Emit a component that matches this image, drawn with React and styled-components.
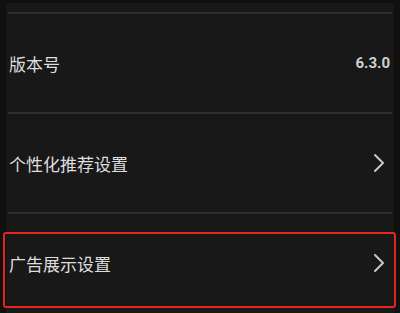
import React from "react";
import styled, { createGlobalStyle } from "styled-components";

const Global = createGlobalStyle`
  html, body { margin: 0; padding: 0; background: #101010; }
  body { font-family: "Noto Sans CJK SC", "Noto Sans", Roboto, sans-serif; }
`;

const Screen = styled.div`
  position: relative;
  width: 400px;
  height: 313px;
  overflow: hidden;
  background: #101010;
  padding: 3px 6px 0 6px;
  box-sizing: border-box;
`;

const Panel = styled.div`
  background: #181818;
  height: 100%;
  display: flex;
  flex-direction: column;
  padding-top: 9px;
  box-sizing: border-box;
`;

const Divider = styled.div`
  height: 2px;
  margin: 0 2px;
  background: #2e2e2e;
  flex: none;
`;

const Row = styled.div`
  height: 98px;
  flex: none;
  display: flex;
  align-items: center;
  justify-content: space-between;
  padding: 0 4px 0 3px;
  box-sizing: border-box;
`;

const Label = styled.span`
  font-size: 17px;
  color: #dedede;
`;

const Value = styled.span`
  font-family: Roboto, "Liberation Sans", sans-serif;
  font-weight: 700;
  font-size: 15px;
  color: #d0d0d0;
`;

const ChevronBox = styled.span`
  display: block;
  margin-right: 5px;
`;

const Highlight = styled.div`
  position: absolute;
  left: 3px;
  top: 232px;
  width: 393px;
  height: 76px;
  border: 2.5px solid #e5231f;
  border-radius: 3px;
  box-sizing: border-box;
  pointer-events: none;
`;

const Chevron = () => (
  <ChevronBox>
    <svg width="12" height="20" viewBox="0 0 12 20" style={{ display: "block" }}>
      <polyline points="2,2 10,10 2,18" fill="none" stroke="#c8c8c8" strokeWidth="2" strokeLinecap="round" strokeLinejoin="round" />
    </svg>
  </ChevronBox>
);

export default function App() {
  return (
    <>
      <Global />
      <Screen>
        <Panel>
          <Divider />
          <Row>
            <Label>版本号</Label>
            <Value>6.3.0</Value>
          </Row>
          <Divider />
          <Row>
            <Label>个性化推荐设置</Label>
            <Chevron />
          </Row>
          <Divider />
          <Row>
            <Label>广告展示设置</Label>
            <Chevron />
          </Row>
        </Panel>
        <Highlight />
      </Screen>
    </>
  );
}
